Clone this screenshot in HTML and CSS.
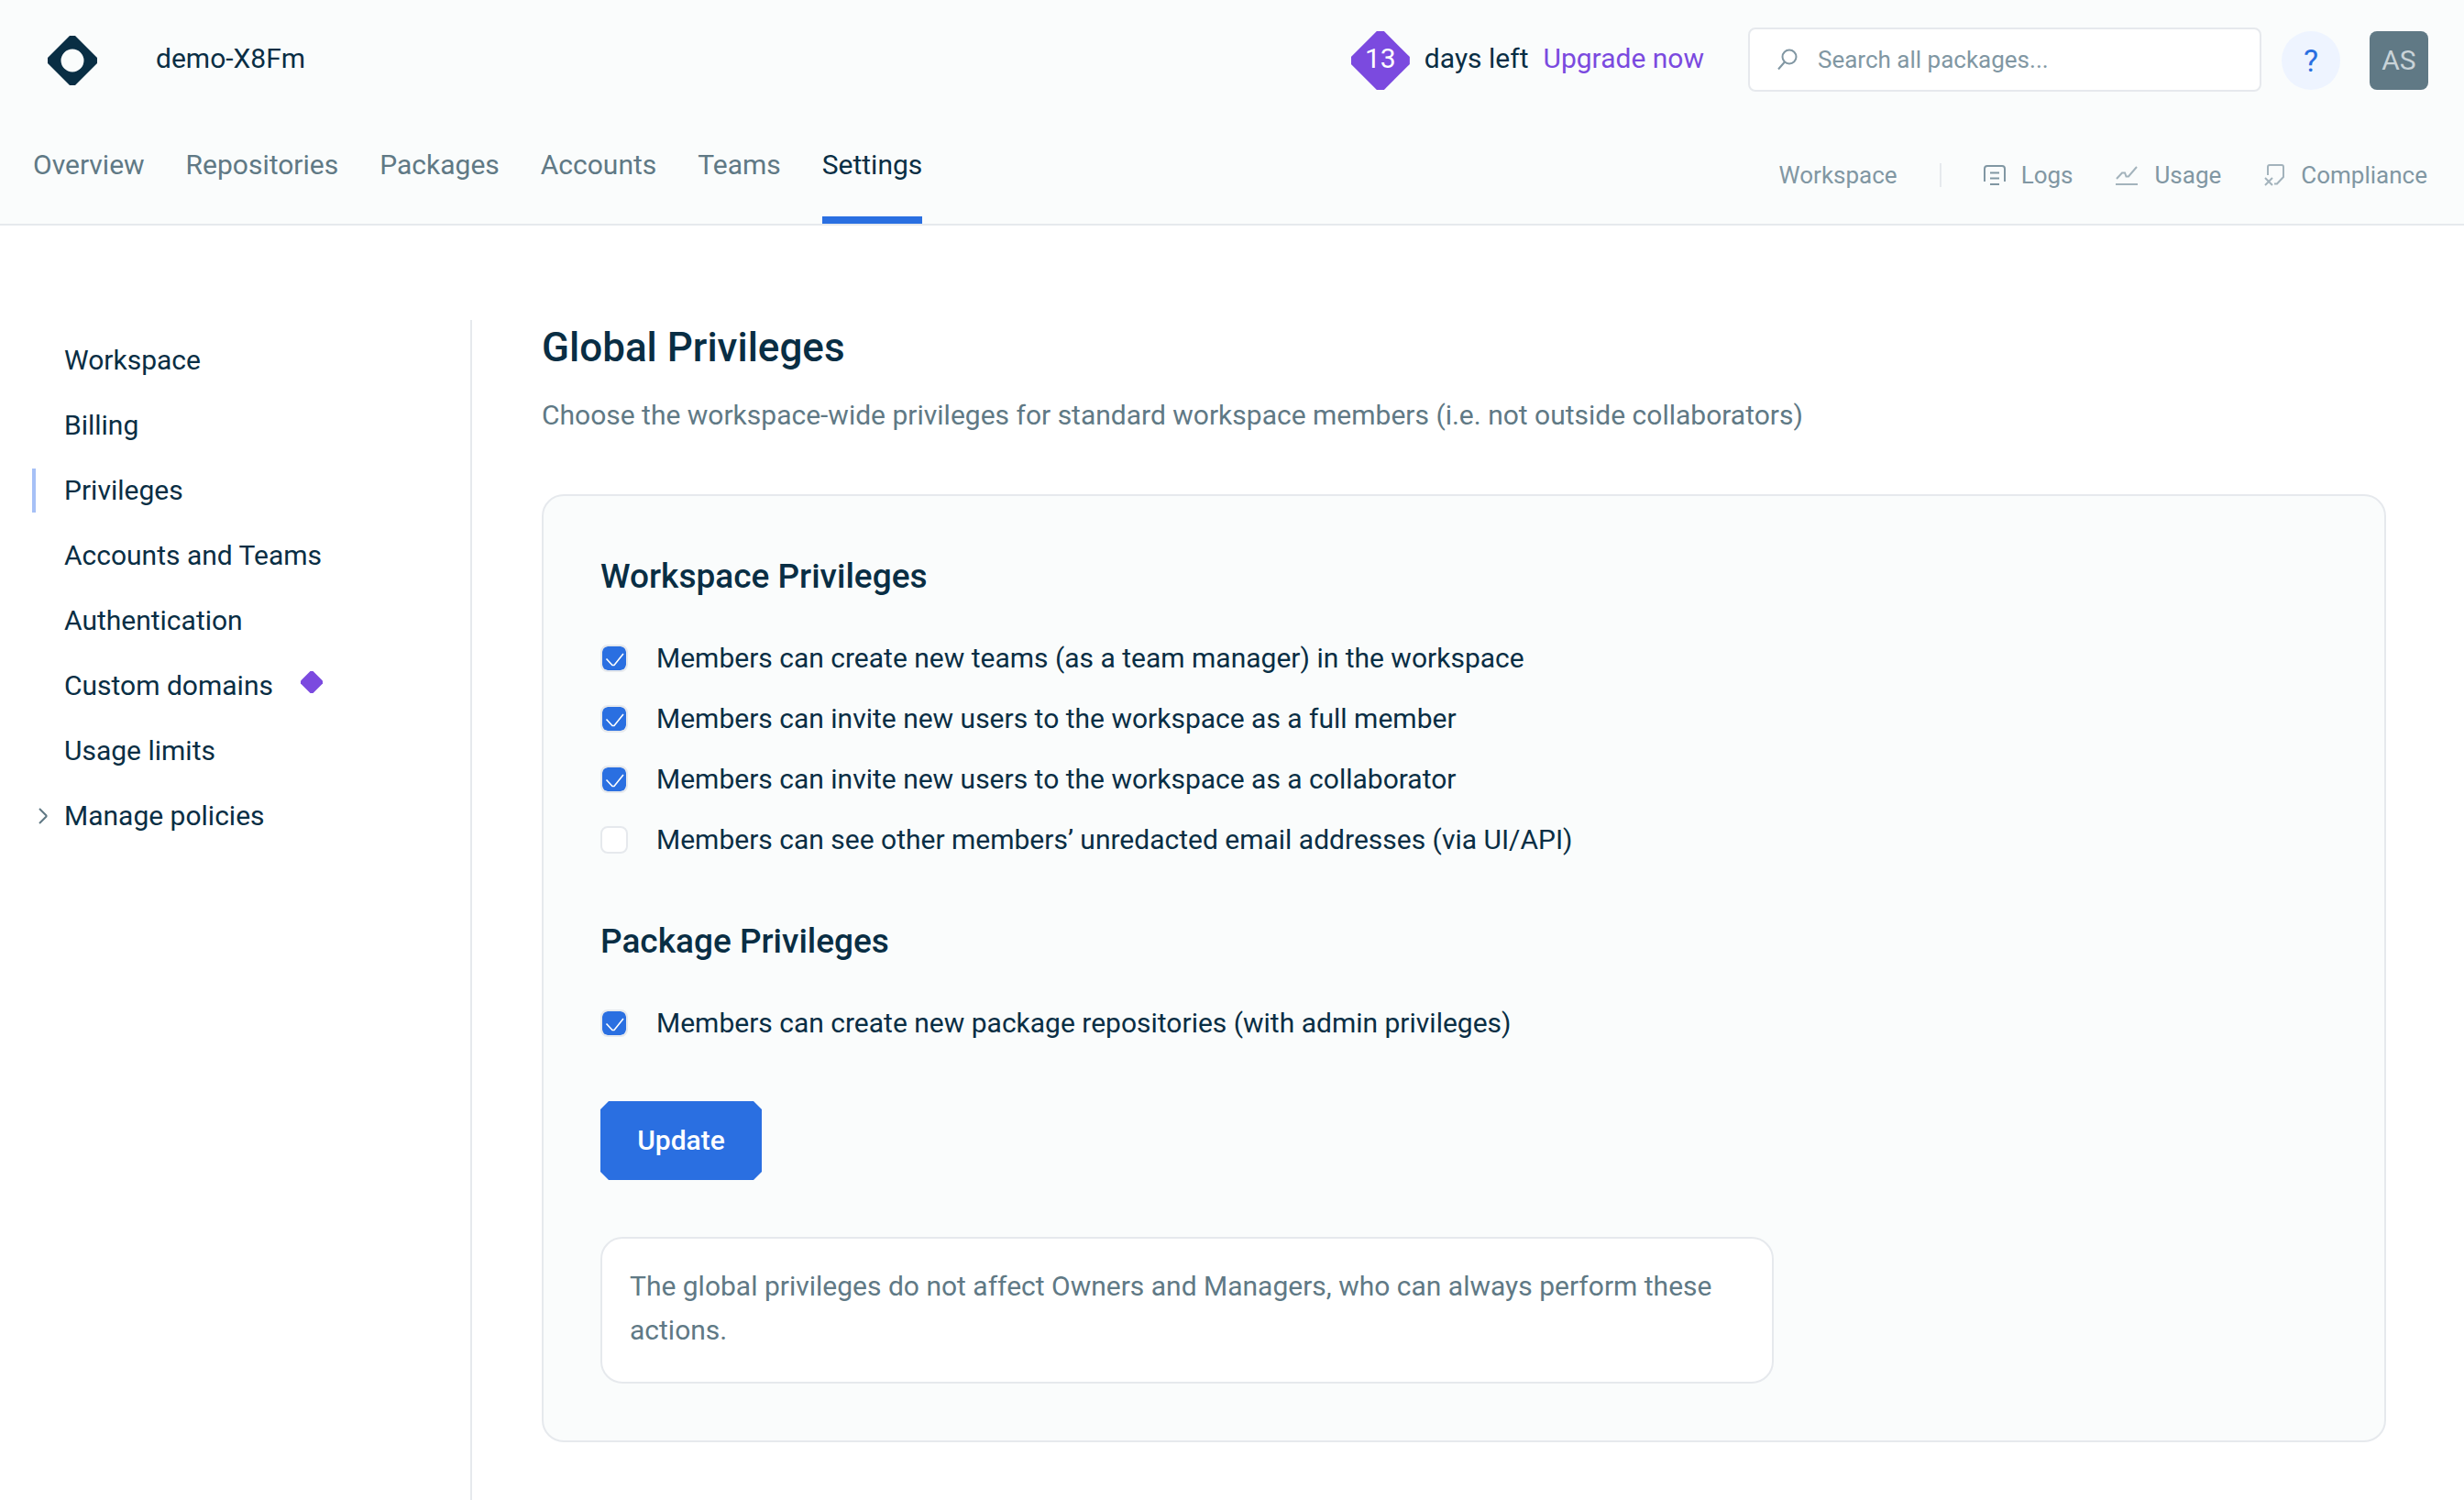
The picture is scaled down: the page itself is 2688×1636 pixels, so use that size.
FILE: index.html
```html
<!DOCTYPE html>
<html lang="en">
<head>
<meta charset="utf-8">
<meta name="viewport" content="width=device-width, initial-scale=1">
<title>Global Privileges - demo-X8Fm</title>
<link rel="stylesheet" href="styles.css">
</head>
<body>
<header class="header">
  <div class="topbar">
    <a class="logo" href="#" aria-label="Home">
      <svg width="54" height="54" viewBox="0 0 54 54"><path fill="#092e44" fill-rule="evenodd" d="M24 0h6L54 24v6L30 54h-6L0 30v-6zM27 14.500a12.500 12.500 0 1 0 0 25a12.500 12.500 0 1 0 0-25z"/></svg>
    </a>
    <a class="workspace-name" href="#">demo-X8Fm</a>
    <div class="trial">
      <span class="trial-days">13</span>
      <span class="trial-text">days left</span>
      <a class="trial-text upgrade" href="#">Upgrade now</a>
    </div>
    <label class="search">
      <svg width="22" height="24" viewBox="0 0 22 24" fill="none" stroke="#8197a3" stroke-width="2"><circle cx="13" cy="9" r="7.500"/><path d="M8 14.500L1 22.500"/></svg>
      <input class="search-input" type="search" placeholder="Search all packages..." aria-label="Search all packages">
    </label>
    <button class="help" type="button" aria-label="Help">?</button>
    <button class="avatar" type="button">AS</button>
  </div>
  <div class="navbar">
    <nav class="tabs">
      <a class="tab" href="#">Overview</a>
      <a class="tab" href="#">Repositories</a>
      <a class="tab" href="#">Packages</a>
      <a class="tab" href="#">Accounts</a>
      <a class="tab" href="#">Teams</a>
      <a class="tab tab-active" href="#">Settings</a>
    </nav>
    <nav class="tools">
      <span>Workspace</span>
      <span class="divider"></span>
      <a class="tool" href="#"><svg width="24" height="24" viewBox="0 0 24 24" fill="none" stroke="#8197a3" stroke-width="2"><path d="M1 19V5Q1 2 4 2H20Q23 2 23 5V19M7 9.500H17M7 15.500H17M7 22H17"/></svg>Logs</a>
      <a class="tool" href="#"><svg width="26" height="24" viewBox="0 0 26 24" fill="none" stroke="#a3b3bc" stroke-width="2"><path d="M2 16L8 9.500H11L12.500 13.500H15L24 3M1 22H25"/></svg>Usage</a>
      <a class="tool" href="#"><svg width="24" height="26" viewBox="0 0 24 26" fill="none" stroke="#a3b3bc" stroke-width="2"><path d="M5 13V4Q5 2 7 2H20Q22 2 22 4V15L15 22.500H12M2 16L10 24M10 16L2 24"/></svg>Compliance</a>
    </nav>
  </div>
</header>
<div class="page">
  <aside class="sidebar">
    <a class="side-link" href="#">Workspace</a>
    <a class="side-link" href="#">Billing</a>
    <a class="side-link side-active" href="#">Privileges</a>
    <a class="side-link" href="#">Accounts and Teams</a>
    <a class="side-link" href="#">Authentication</a>
    <a class="side-link" href="#">Custom domains <svg class="gem" width="24" height="24" viewBox="0 0 24 24"><path fill="#7b4adf" d="M10.500 0h3L24 10.500v3L13.500 24h-3L0 13.500v-3z"/></svg></a>
    <a class="side-link" href="#">Usage limits</a>
    <a class="side-link side-group" href="#"><svg width="10" height="18" viewBox="0 0 10 18" fill="none" stroke="#607985" stroke-width="2"><path d="M1 1L8.500 8.500V9.500L1 17"/></svg>Manage policies</a>
  </aside>
  <main class="main">
    <h1 class="title">Global Privileges</h1>
    <p class="lead">Choose the workspace-wide privileges for standard workspace members (i.e. not outside collaborators)</p>
    <form class="card">
      <h2 class="section-title">Workspace Privileges</h2>
      <div class="options">
        <label class="option"><input class="check" type="checkbox" checked>Members can create new teams (as a team manager) in the workspace</label>
        <label class="option"><input class="check" type="checkbox" checked>Members can invite new users to the workspace as a full member</label>
        <label class="option"><input class="check" type="checkbox" checked>Members can invite new users to the workspace as a collaborator</label>
        <label class="option"><input class="check" type="checkbox">Members can see other members’ unredacted email addresses (via UI/API)</label>
      </div>
      <h2 class="section-title">Package Privileges</h2>
      <div class="options">
        <label class="option"><input class="check" type="checkbox" checked>Members can create new package repositories (with admin privileges)</label>
      </div>
      <button class="update" type="button">Update</button>
      <p class="note">The global privileges do not affect Owners and Managers, who can always perform these actions.</p>
    </form>
  </main>
</div>
</body>
</html>
```
FILE: styles.css
```css
* {
  box-sizing: border-box;
}

body {
  margin: 0;
  min-height: 100vh;
  display: flex;
  flex-direction: column;
  background: #fff;
  color: #092e44;
  font: 30px/48px Roboto, "Liberation Sans", sans-serif;
}

a {
  color: inherit;
  text-decoration: none;
}

button,
input {
  font: inherit;
}

svg {
  flex: none;
}

h1,
h2,
p {
  margin: 0;
}

.header {
  background: #fafcfc;
  border-bottom: 2px solid #e6e9ed;
}

.topbar {
  display: flex;
  align-items: center;
  height: 132px;
  padding: 0 39px 0 52px;
}

.logo {
  display: flex;
}

.workspace-name {
  margin-left: 64px;
  padding-bottom: 4px;
}

.trial {
  display: flex;
  align-items: center;
  gap: 16px;
  margin-left: auto;
}

.trial-days {
  width: 64px;
  height: 64px;
  background: #7b4adf;
  color: #fff;
  line-height: 60px;
  text-align: center;
  clip-path: polygon(28px 0, 36px 0, 64px 28px, 64px 36px, 36px 64px, 28px 64px, 0 36px, 0 28px);
}

.trial-text {
  padding-bottom: 4px;
}

.upgrade {
  color: #7b4adf;
}

.search {
  display: flex;
  align-items: center;
  gap: 22px;
  width: 560px;
  height: 70px;
  margin: 0 0 2px 48px;
  padding: 0 30px;
  border: 2px solid #e6e9ed;
  border-radius: 8px;
  background: #fff;
}

.search-input {
  flex: 1;
  min-width: 0;
  padding: 0;
  border: 0;
  outline: 0;
  background: none;
  color: #092e44;
  font-size: 26px;
}

.search-input::placeholder {
  color: #8197a3;
  opacity: 1;
}

.help,
.avatar {
  width: 64px;
  height: 64px;
  padding: 0;
  border: 0;
}

.help {
  margin-left: 22px;
  border-radius: 50%;
  background: #eef4ff;
  color: #2a6fe1;
  font-size: 34px;
}

.avatar {
  margin-left: 32px;
  border-radius: 8px;
  background: #607985;
  color: #c9d3d8;
}

.navbar {
  display: flex;
  justify-content: space-between;
  height: 112px;
  padding: 0 40px 0 36px;
}

.tabs {
  display: flex;
  gap: 45px;
  color: #607985;
}

.tab {
  padding-top: 24px;
}

.tab-active {
  border-bottom: 8px solid #2a6fe1;
  color: #092e44;
}

.tools {
  display: flex;
  align-items: center;
  gap: 46px;
  height: 118px;
  color: #8197a3;
  font-size: 26px;
}

.divider {
  width: 2px;
  height: 26px;
  background: #e6e9ed;
}

.tool {
  display: flex;
  align-items: center;
  gap: 17px;
}

.page {
  display: flex;
  flex: 1;
  gap: 76px;
  padding: 103px 85px 0 35px;
}

.sidebar {
  display: flex;
  flex-direction: column;
  gap: 23px;
  width: 480px;
  padding-top: 20px;
  border-right: 2px solid #e6e9ed;
}

.side-link {
  display: flex;
  align-items: center;
  padding-left: 35px;
}

.side-active {
  padding-left: 31px;
  border-left: 4px solid #a6c0f6;
}

.side-group {
  gap: 18px;
  padding-left: 7px;
}

.gem {
  margin: 0 0 8px 30px;
}

.main {
  flex: 1;
  padding-bottom: 62px;
}

.title {
  font-size: 44px;
  font-weight: 500;
  line-height: 60px;
}

.lead {
  margin-top: 20px;
  color: #607985;
}

.card {
  margin-top: 62px;
  padding: 62px;
  border: 2px solid #e6e9ed;
  border-radius: 24px;
  background: #fafcfc;
}

.section-title {
  padding-top: 2px;
  font-size: 37px;
  font-weight: 500;
  line-height: 48px;
}

.options {
  display: flex;
  flex-direction: column;
  gap: 18px;
  margin: 41px 0 61px;
}

.option {
  display: flex;
  align-items: center;
  gap: 31px;
}

.check {
  appearance: none;
  width: 30px;
  height: 30px;
  margin: 0;
  border: 2px solid #e6e9ed;
  border-radius: 8px;
  background: #fff;
}

.check:checked {
  background: #2a6fe1 url("data:image/svg+xml,%3Csvg xmlns='http://www.w3.org/2000/svg' viewBox='0 0 26 26' fill='none' stroke='%23fff' stroke-width='1.600'%3E%3Cpath d='M4.500 13.500L11 20.500H13L23 8'/%3E%3C/svg%3E") center / 26px 26px no-repeat padding-box;
}

.update {
  display: block;
  width: 176px;
  height: 86px;
  padding: 0;
  border: 0;
  background: #2a6fe1;
  color: #fff;
  font-weight: 500;
  clip-path: polygon(9px 0, calc(100% - 9px) 0, 100% 9px, 100% calc(100% - 9px), calc(100% - 9px) 100%, 9px 100%, 0 calc(100% - 9px), 0 9px);
}

.note {
  max-width: 1280px;
  margin-top: 62px;
  padding: 28px 30px 32px;
  border: 2px solid #e6e9ed;
  border-radius: 24px;
  background: #fff;
  color: #607985;
}
```
